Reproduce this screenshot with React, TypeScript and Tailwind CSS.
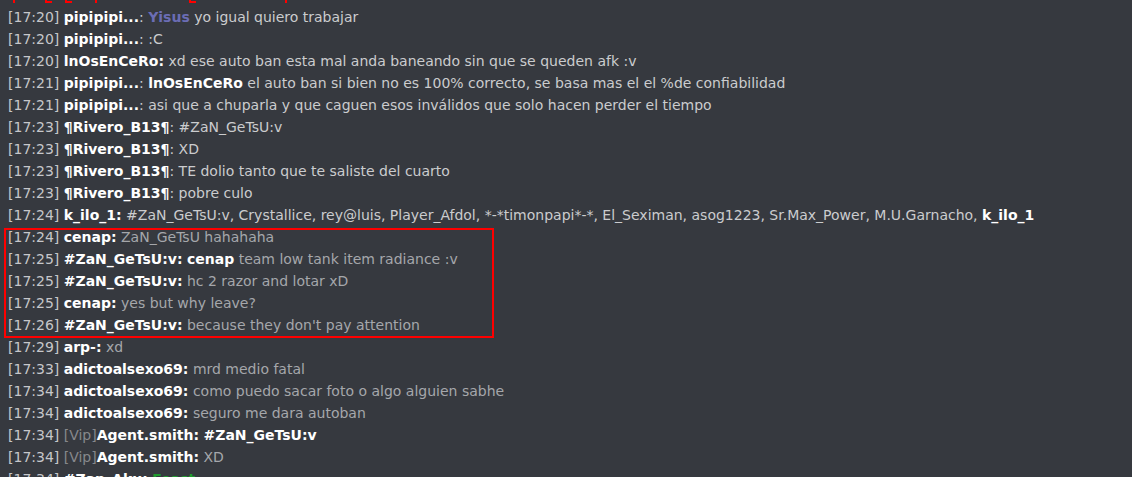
import * as React from "react";

type Part = { t: string; k?: "name" | "bold" | "ping" | "vip" | "feast" };
type Line = { time: string; parts: Part[]; tone?: "light" | "gray" };

const LINES: Line[] = [
  { time: "17:20", tone: "light", parts: [{ t: "pipipipi...", k: "name" }, { t: ": " }, { t: "Yisus", k: "ping" }, { t: " yo igual quiero trabajar" }] },
  { time: "17:20", tone: "light", parts: [{ t: "pipipipi...", k: "name" }, { t: ": :C" }] },
  { time: "17:20", tone: "light", parts: [{ t: "lnOsEnCeRo:", k: "name" }, { t: " xd ese auto ban esta mal anda baneando sin que se queden afk :v" }] },
  { time: "17:21", tone: "light", parts: [{ t: "pipipipi...", k: "name" }, { t: ": " }, { t: "lnOsEnCeRo", k: "bold" }, { t: " el auto ban si bien no es 100% correcto, se basa mas el el %de confiabilidad" }] },
  { time: "17:21", tone: "light", parts: [{ t: "pipipipi...", k: "name" }, { t: ": asi que a chuparla y que caguen esos inválidos que solo hacen perder el tiempo" }] },
  { time: "17:23", tone: "light", parts: [{ t: "¶Rivero_B13¶", k: "name" }, { t: ": #ZaN_GeTsU:v" }] },
  { time: "17:23", tone: "light", parts: [{ t: "¶Rivero_B13¶", k: "name" }, { t: ": XD" }] },
  { time: "17:23", tone: "light", parts: [{ t: "¶Rivero_B13¶", k: "name" }, { t: ": TE dolio tanto que te saliste del cuarto" }] },
  { time: "17:23", tone: "light", parts: [{ t: "¶Rivero_B13¶", k: "name" }, { t: ": pobre culo" }] },
  {
    time: "17:24",
    tone: "light",
    parts: [
      { t: "k_ilo_1:", k: "name" },
      { t: " #ZaN_GeTsU:v, Crystallice, rey@luis, Player_Afdol, *-*timonpapi*-*, El_Seximan, asog1223, Sr.Max_Power, M.U.Garnacho, " },
      { t: "k_ilo_1", k: "bold" },
    ],
  },
];

// lo que va dentro del recuadro rojo
const BOXED: Line[] = [
  { time: "17:24", tone: "gray", parts: [{ t: "cenap:", k: "name" }, { t: " ZaN_GeTsU hahahaha" }] },
  { time: "17:25", tone: "gray", parts: [{ t: "#ZaN_GeTsU:v:", k: "name" }, { t: " " }, { t: "cenap", k: "bold" }, { t: " team low tank item radiance :v" }] },
  { time: "17:25", tone: "gray", parts: [{ t: "#ZaN_GeTsU:v:", k: "name" }, { t: " hc 2 razor and lotar xD" }] },
  { time: "17:25", tone: "gray", parts: [{ t: "cenap:", k: "name" }, { t: " yes but why leave?" }] },
  { time: "17:26", tone: "gray", parts: [{ t: "#ZaN_GeTsU:v:", k: "name" }, { t: " because they don't pay attention" }] },
];

const AFTER: Line[] = [
  { time: "17:29", tone: "gray", parts: [{ t: "arp-:", k: "name" }, { t: " xd" }] },
  { time: "17:33", tone: "gray", parts: [{ t: "adictoalsexo69:", k: "name" }, { t: " mrd medio fatal" }] },
  { time: "17:34", tone: "gray", parts: [{ t: "adictoalsexo69:", k: "name" }, { t: " como puedo sacar foto o algo alguien sabhe" }] },
  { time: "17:34", tone: "gray", parts: [{ t: "adictoalsexo69:", k: "name" }, { t: " seguro me dara autoban" }] },
  { time: "17:34", tone: "gray", parts: [{ t: "[Vip]", k: "vip" }, { t: "Agent.smith:", k: "name" }, { t: " " }, { t: "#ZaN_GeTsU:v", k: "bold" }] },
  { time: "17:34", tone: "gray", parts: [{ t: "[Vip]", k: "vip" }, { t: "Agent.smith:", k: "name" }, { t: " XD" }] },
  { time: "17:34", tone: "gray", parts: [{ t: "#Zan_Aku:", k: "name" }, { t: " " }, { t: "Feast", k: "feast" }] },
];

function ChatLine({ line }: { line: Line }) {
  const msg = line.tone === "gray" ? "text-[#a5a7ab]" : "text-[#cbccce]";
  return (
    <div className="whitespace-nowrap leading-[22px]">
      <span className="text-[#c6c7ca]">[{line.time}] </span>
      {line.parts.map((p, i) => {
        if (p.k === "name" || p.k === "bold") return <span key={i} className="font-bold text-white">{p.t}</span>;
        if (p.k === "ping") return <span key={i} className="font-bold text-[#6b6db5]">{p.t}</span>;
        if (p.k === "vip") return <span key={i} className="text-[#86888c]">{p.t}</span>;
        if (p.k === "feast") return <span key={i} className="font-bold text-[#1f9a2e]">{p.t}</span>;
        return <span key={i} className={msg}>{p.t}</span>;
      })}
    </div>
  );
}

export default function App() {
  return (
    <div className="relative h-[477px] w-[1132px] overflow-hidden bg-[#36393f] px-2 pt-[6px] font-['DejaVu_Sans',sans-serif] text-[14px]">
      {/* restos de la anotación roja de arriba */}
      <svg className="absolute left-0 top-0" width="300" height="4">
        <path d="M14 0v3M46 0v2h6M66 0v2h6M96 0v3M190 0v2h6M286 0v3" stroke="#ff0000" strokeWidth="2" fill="none" />
      </svg>

      {LINES.map((l, i) => (
        <ChatLine key={i} line={l} />
      ))}

      <div className="relative">
        {BOXED.map((l, i) => (
          <ChatLine key={i} line={l} />
        ))}
        {/* recuadro rojo de la captura, dibujado encima */}
        <div className="pointer-events-none absolute left-[-4px] top-[2px] h-[110px] w-[490px] border-2 border-[#ff0000]" />
      </div>

      {AFTER.map((l, i) => (
        <ChatLine key={i} line={l} />
      ))}
    </div>
  );
}
